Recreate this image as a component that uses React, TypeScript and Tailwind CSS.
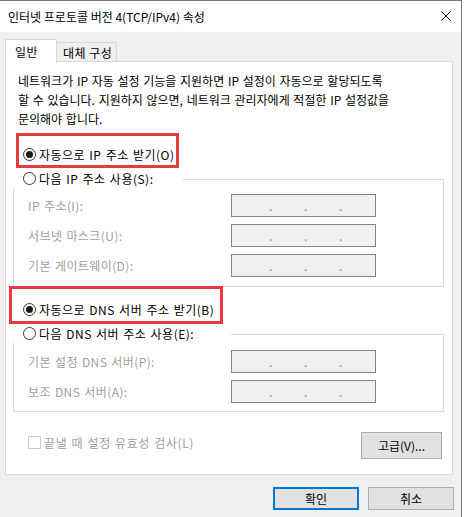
import React from "react";

function Radio({ checked }: { checked?: boolean }) {
  return (
    <span className="flex h-[13px] w-[13px] shrink-0 items-center justify-center rounded-full border border-[#333333] bg-white">
      {checked && <span className="h-[7px] w-[7px] rounded-full bg-[#1a1a1a]" />}
    </span>
  );
}

function IpBox() {
  return (
    <div className="flex h-[23px] w-[145px] items-center border border-[#838383] bg-[#f0f0f0] pl-[37px] text-[#8c8c8c]">
      <span className="w-[35px] leading-none">.</span>
      <span className="w-[35px] leading-none">.</span>
      <span className="w-[35px] leading-none">.</span>
    </div>
  );
}

function FieldRow({ label }: { label: string }) {
  return (
    <div className="flex h-[23px] items-center">
      <span className="w-[203px] tracking-[0.4px] text-[#a0a0a0] [word-spacing:1px]">{label}</span>
      <IpBox />
    </div>
  );
}

export default function App() {
  return (
    <div className="relative h-[517px] w-[464px] bg-white font-['Noto_Sans_CJK_KR',sans-serif] text-[12px] leading-[19px] text-black">
      <div className="h-[517px] w-[462px] border-r border-t border-[#7a7a7a] bg-[#f0f0f0]">
        {/* title bar */}
        <div className="flex h-[31px] items-center justify-between bg-white pl-[8px] pr-[10px]">
          <span>인터넷 프로토콜 버전 4(TCP/IPv4) 속성</span>
          <svg width="10" height="10" viewBox="0 0 10 10" className="mt-[-1px]">
            <path d="M0.5 0.5 L9.5 9.5 M9.5 0.5 L0.5 9.5" stroke="#111" strokeWidth="1" />
          </svg>
        </div>

        {/* tabs */}
        <div className="ml-[5px] mt-[7px] flex h-[23px] items-end">
          <div className="relative z-10 mb-[-1px] h-[24px] w-[52px] border-x border-t border-[#d9d9d9] bg-white pl-[9px] pt-[2px] tracking-[0.5px]">
            일반
          </div>
          <div className="ml-[-1px] h-[20px] w-[61px] border-x border-t border-[#d9d9d9] bg-[#f0f0f0] pl-[6px] leading-[19px] tracking-[0.5px]">
            대체 구성
          </div>
        </div>

        {/* panel */}
        <div className="relative ml-[5px] mt-[-1px] h-[414px] w-[448px] border border-[#d9d9d9] bg-white">
          <p className="ml-[12px] mt-[9px] whitespace-nowrap [word-spacing:1px]">
            네트워크가 IP 자동 설정 기능을 지원하면 IP 설정이 자동으로 할당되도록
            <br />할 수 있습니다. 지원하지 않으면, 네트워크 관리자에게 적절한 IP 설정값을
            <br />문의해야 합니다.
          </p>

          <div className="ml-[7px] mt-[17px] flex h-[19px] items-center gap-[3px] pl-[10px]">
            <Radio checked />
            <span className="tracking-[0.5px] [word-spacing:1px]">자동으로 IP 주소 받기(O)</span>
          </div>

          <div className="relative z-10 ml-[7px] mt-[5px] flex h-[19px] w-[170px] items-center gap-[3px] bg-white pl-[10px]">
            <Radio />
            <span className="tracking-[0.5px] [word-spacing:1px]">다음 IP 주소 사용(S):</span>
          </div>
          <div className="ml-[7px] mt-[-9px] flex h-[108px] w-[431px] flex-col gap-[7px] border border-[#dcdcdc] pl-[14px] pt-[14px]">
            <FieldRow label="IP 주소(I):" />
            <FieldRow label="서브넷 마스크(U):" />
            <FieldRow label="기본 게이트웨이(D):" />
          </div>

          <div className="ml-[7px] mt-[13px] flex h-[19px] items-center gap-[3px] pl-[10px]">
            <Radio checked />
            <span className="tracking-[0.5px] [word-spacing:1px]">자동으로 DNS 서버 주소 받기(B)</span>
          </div>

          <div className="relative z-10 ml-[7px] mt-[5px] flex h-[19px] w-[218px] items-center gap-[3px] bg-white pl-[10px]">
            <Radio />
            <span className="tracking-[0.5px] [word-spacing:1px]">다음 DNS 서버 주소 사용(E):</span>
          </div>
          <div className="ml-[7px] mt-[-9px] flex h-[78px] w-[431px] flex-col gap-[7px] border border-[#dcdcdc] pl-[14px] pt-[15px]">
            <FieldRow label="기본 설정 DNS 서버(P):" />
            <FieldRow label="보조 DNS 서버(A):" />
          </div>

          <div className="ml-[22px] mr-[10px] mt-[20px] flex items-start justify-between">
            <div className="mt-[1px] flex items-center gap-[3px] text-[#a0a0a0]">
              <span className="h-[13px] w-[13px] border border-[#cccccc] bg-white" />
              <span className="tracking-[0.6px] [word-spacing:1px]">끝낼 때 설정 유효성 검사(L)</span>
            </div>
            <button className="flex h-[27px] w-[81px] items-center justify-center border border-[#adadad] bg-[#e1e1e1]">
              고급(V)...
            </button>
          </div>

          {/* annotation boxes */}
          <div className="pointer-events-none absolute left-[10px] top-[71px] h-[35px] w-[163px] border-[3px] border-[#e53a3f]" />
          <div className="pointer-events-none absolute left-[3px] top-[224px] h-[38px] w-[214px] border-[3px] border-[#e53a3f]" />
        </div>

        {/* dialog buttons */}
        <div className="mr-[7px] mt-[12px] flex justify-end gap-[9px]">
          <button className="flex h-[23px] w-[86px] items-center justify-center border-2 border-[#0078d7] bg-[#e1e1e1]">
            확인
          </button>
          <button className="flex h-[23px] w-[86px] items-center justify-center border border-[#adadad] bg-[#e1e1e1]">
            취소
          </button>
        </div>
      </div>
    </div>
  );
}
